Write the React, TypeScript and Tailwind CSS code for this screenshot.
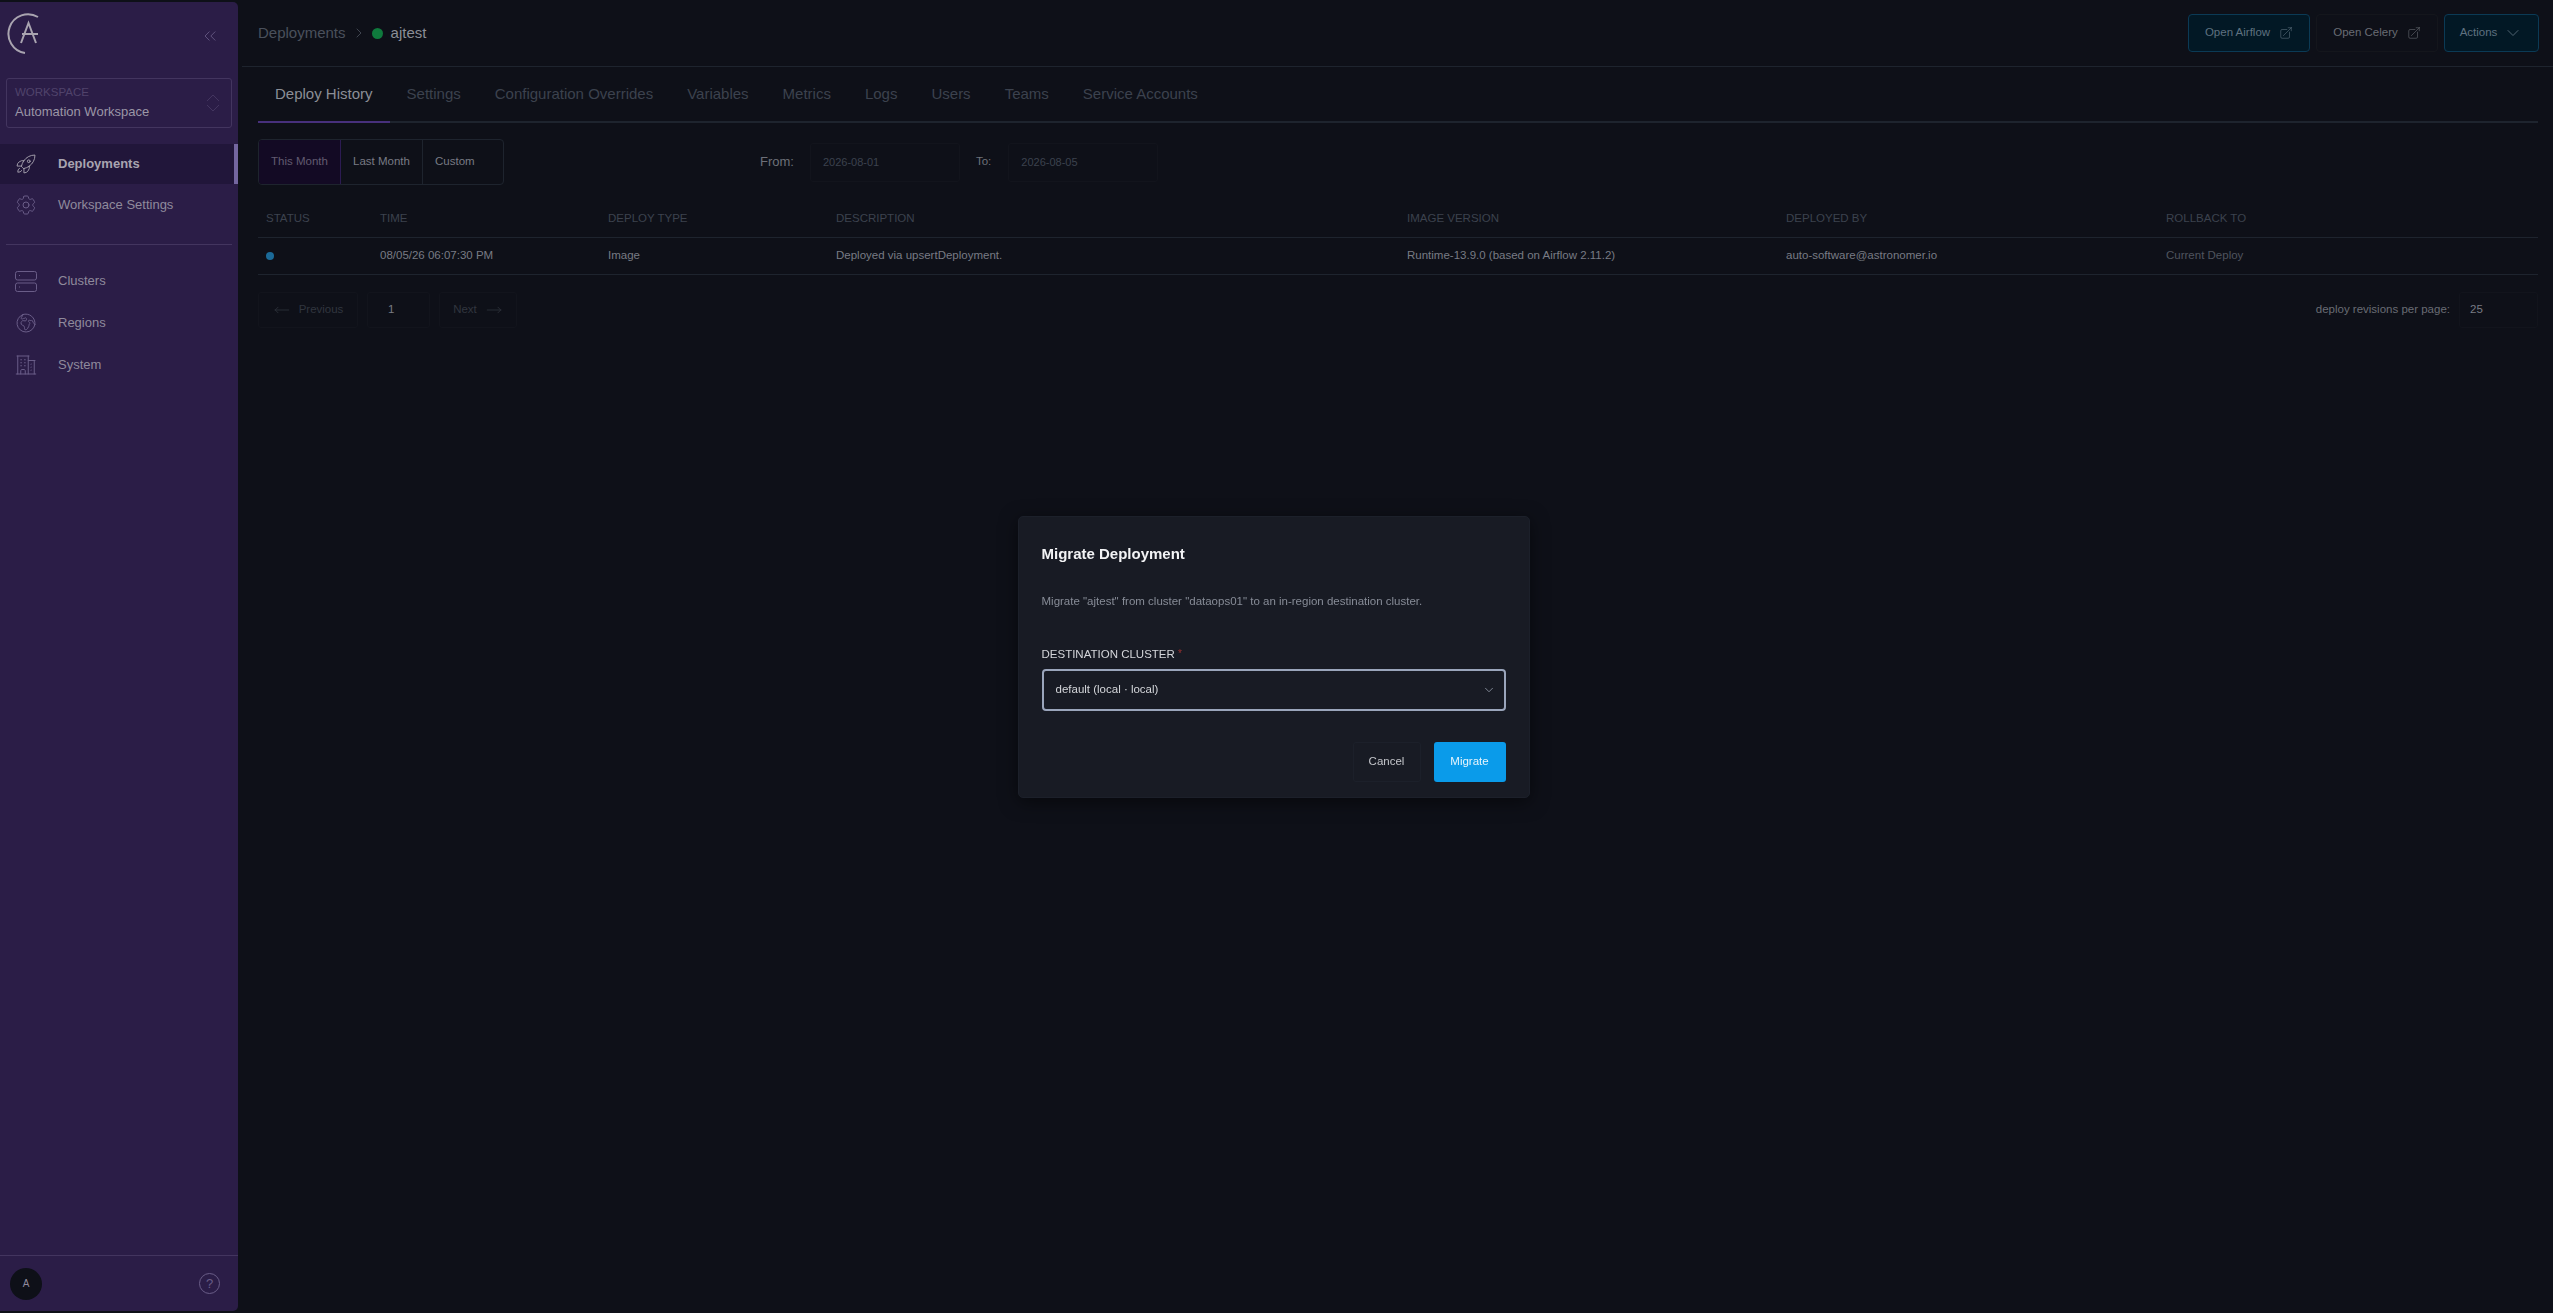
import { ChevronRight, ChevronDown, ChevronsLeft } from 'lucide-react';
import {
  HiOutlineRocketLaunch,
  HiOutlineCog6Tooth,
  HiOutlineGlobeEuropeAfrica,
  HiOutlineBuildingOffice2,
  HiOutlineArrowTopRightOnSquare,
  HiOutlineArrowLongLeft,
  HiOutlineArrowLongRight,
} from 'react-icons/hi2';

const tabs = ['Settings', 'Configuration Overrides', 'Variables', 'Metrics', 'Logs', 'Users', 'Teams', 'Service Accounts'];

const columns = ['Status', 'Time', 'Deploy Type', 'Description', 'Image Version', 'Deployed By', 'Rollback To'];

const gridCols = 'grid grid-cols-[114px_228px_228px_571px_379px_380px_1fr]';

function Logo() {
  return (
    <svg viewBox="0 0 48 48" className="w-12 h-12 text-[#a9a4b0]" fill="none" stroke="currentColor">
      <path d="M32 5A19.5 19.5 0 1 0 19 41" strokeWidth="2" />
      <path d="M15 31L22.5 11L30 31" strokeWidth="2" />
      <path d="M16 22H32" strokeWidth="2" />
    </svg>
  );
}

function ClusterIcon() {
  return (
    <svg viewBox="0 0 24 24" className="w-[24px] h-[24px] text-[#6a5d88]" fill="none" stroke="currentColor" strokeWidth="1">
      <rect x="1.5" y="2.5" width="21" height="8.5" rx="2" />
      <rect x="1.5" y="14" width="21" height="8.5" rx="2" />
      <path d="M5 6.5h1M5 18h1" />
    </svg>
  );
}

function NavItem({ icon, label, active }: { icon: React.ReactNode; label: string; active?: boolean }) {
  return (
    <div className={`relative flex items-center ${active ? 'h-[40px] bg-[#21163a] font-bold text-[#a9a4b0]' : 'h-[42px] text-[#8f8a9c]'}`}>
      <div className="w-[58px] flex justify-center pr-[6px] shrink-0">{icon}</div>
      <span className="text-[13px]">{label}</span>
      {active && <div className="absolute right-0 top-0 bottom-0 w-1 bg-[#7466a0]" />}
    </div>
  );
}

function Sidebar() {
  const iconClass = 'w-[24px] h-[24px] text-[#6a5d88]';
  return (
    <aside className="w-[238px] shrink-0 my-[2px] bg-[#2b1d47] rounded-r-[5px] flex flex-col">
      <div className="h-[76px] flex items-start justify-between pl-[6px] pr-[18px] pt-[10px]">
        <Logo />
        <ChevronsLeft className="w-[20px] h-[20px] mt-[14px] text-[#6a5d88]" strokeWidth={1} />
      </div>
      <div className="mx-[6px] h-[50px] border border-[#43355f] rounded-[3px] flex items-center justify-between pl-[8px] pr-[11px]">
        <div>
          <div className="text-[11.5px] leading-[14px] text-[#50436b]">WORKSPACE</div>
          <div className="text-[13px] leading-[18px] mt-[4px] text-[#9b96a6]">Automation Workspace</div>
        </div>
        <svg viewBox="0 0 14 20" className="w-[14px] h-[20px] text-[#43355f]" fill="none" stroke="currentColor">
          <path d="M1 8L7 2L13 8M1 12L7 18L13 12" />
        </svg>
      </div>
      <div className="mt-[16px]">
        <NavItem active label="Deployments" icon={<HiOutlineRocketLaunch className="w-[22px] h-[22px] text-[#a9a4b0]" strokeWidth={1} />} />
        <NavItem label="Workspace Settings" icon={<HiOutlineCog6Tooth className={iconClass} strokeWidth={1} />} />
      </div>
      <div className="mx-[6px] mt-[18px] border-t border-[#43355f]" />
      <div className="mt-[15px]">
        <NavItem label="Clusters" icon={<ClusterIcon />} />
        <NavItem label="Regions" icon={<HiOutlineGlobeEuropeAfrica className={iconClass} strokeWidth={1} />} />
        <NavItem label="System" icon={<HiOutlineBuildingOffice2 className={iconClass} strokeWidth={1} />} />
      </div>
      <div className="mt-auto h-[56px] border-t border-[#43355f] flex items-center justify-between pl-[10px] pr-[18px]">
        <div className="w-8 h-8 rounded-full bg-[#0e1018] flex items-center justify-center text-[10px] text-[#8f8a9c]">A</div>
        <div className="w-[21px] h-[21px] rounded-full border border-[#6a5d88] flex items-center justify-center text-[13px] text-[#6a5d88]">?</div>
      </div>
    </aside>
  );
}

function Header() {
  return (
    <header className="h-[67px] border-b border-[#1e242e] flex items-center justify-between pl-4 pr-[14px] shrink-0">
      <div className="flex items-center text-[15px]">
        <span className="text-[#4a505c]">Deployments</span>
        <ChevronRight className="w-[16px] h-[16px] mx-[5px] text-[#4a505c]" strokeWidth={1.25} />
        <span className="w-[11px] h-[11px] rounded-full bg-[#0f7a3d] mr-2" />
        <span className="text-[#8b8e96]">ajtest</span>
      </div>
      <div className="flex items-center gap-[6px] text-[11.5px]">
        <button className="h-[38px] w-[122px] flex items-center justify-center gap-[9px] rounded-[4px] border border-[#0b3a55] bg-[#021825] text-[#5f7180]">
          Open Airflow
          <HiOutlineArrowTopRightOnSquare className="w-[14px] h-[14px]" strokeWidth={1} />
        </button>
        <button className="h-[38px] w-[122px] flex items-center justify-center gap-[9px] rounded-[4px] border border-[#14161c] text-[#696c74]">
          Open Celery
          <HiOutlineArrowTopRightOnSquare className="w-[14px] h-[14px]" strokeWidth={1} />
        </button>
        <button className="h-[38px] w-[95px] flex items-center justify-center gap-[6px] rounded-[4px] border border-[#0b3a55] bg-[#021825] text-[#5f7180]">
          Actions
          <ChevronDown className="w-[20px] h-[20px]" strokeWidth={1} />
        </button>
      </div>
    </header>
  );
}

function Tabs() {
  return (
    <div className="h-[56px] flex items-stretch border-b-2 border-[#1e242e]">
      <div className="px-[17px] pt-[1px] -mb-[2px] border-b-2 border-[#47307c] flex items-center text-[15px] text-[#8b8e96]">Deploy History</div>
      {tabs.map((t) => (
        <div key={t} className="px-[17px] pt-[1px] flex items-center text-[15px] text-[#3c424e]">{t}</div>
      ))}
    </div>
  );
}

function Filters() {
  return (
    <div className="mt-4 flex items-center">
      <div className="h-[46px] w-[246px] flex rounded-[4px] border border-[#1e242e] text-[11.5px] overflow-hidden">
        <div className="w-[82px] flex items-center justify-center bg-[#130a24] border-r border-[#2c1b52] text-[#625b70]">This Month</div>
        <div className="w-[82px] flex items-center justify-center border-r border-[#1e242e] text-[#787b84]">Last Month</div>
        <div className="flex-1 flex items-center pl-[12px] text-[#787b84]">Custom</div>
      </div>
      <span className="ml-[256px] text-[13px] text-[#6d7079]">From:</span>
      <div className="ml-4 w-[150px] h-[39px] border border-[#12141c] rounded-[3px] flex items-center pl-3 text-[11px] text-[#3c424e]">2026-08-01</div>
      <span className="ml-4 text-[11.5px] text-[#6d7079]">To:</span>
      <div className="ml-[17px] w-[150px] h-[39px] border border-[#12141c] rounded-[3px] flex items-center pl-3 text-[11px] text-[#3c424e]">2026-08-05</div>
    </div>
  );
}

function DeployTable() {
  return (
    <div className="mt-[15px]">
      <div className={`${gridCols} h-[38px] items-center border-b border-[#1e242e] text-[11.5px] uppercase text-[#3c424e]`}>
        {columns.map((c) => (
          <div key={c} className="pl-2">{c}</div>
        ))}
      </div>
      <div className={`${gridCols} h-[37px] items-center border-b border-[#1e242e] text-[11.5px] text-[#787b84]`}>
        <div className="pl-2"><div className="w-2 h-2 rounded-full bg-[#1b6a98]" /></div>
        <div className="pl-2">08/05/26 06:07:30 PM</div>
        <div className="pl-2">Image</div>
        <div className="pl-2">Deployed via upsertDeployment.</div>
        <div className="pl-2">Runtime-13.9.0 (based on Airflow 2.11.2)</div>
        <div className="pl-2">auto-software@astronomer.io</div>
        <div className="pl-2 text-[#4f545e]">Current Deploy</div>
      </div>
    </div>
  );
}

function Pagination() {
  return (
    <div className="mt-[17px] flex items-center justify-between text-[11.5px]">
      <div className="flex items-center gap-[9px]">
        <div className="h-[36px] w-[100px] flex items-center justify-center gap-[8px] border border-[#12141c] rounded-[3px] text-[#31363f]">
          <HiOutlineArrowLongLeft className="w-[18px] h-[18px]" strokeWidth={1} />
          Previous
        </div>
        <div className="h-[36px] w-[63px] flex items-center pl-[20px] border border-[#12141c] rounded-[3px] text-[#787b84]">1</div>
        <div className="h-[36px] w-[78px] flex items-center justify-center gap-[8px] border border-[#12141c] rounded-[3px] text-[#31363f]">
          Next
          <HiOutlineArrowLongRight className="w-[18px] h-[18px]" strokeWidth={1} />
        </div>
      </div>
      <div className="flex items-center gap-[9px]">
        <span className="text-[#696c74]">deploy revisions per page:</span>
        <div className="h-[36px] w-[79px] flex items-center pl-[10px] border border-[#12141c] rounded-[3px] text-[#787b84]">25</div>
      </div>
    </div>
  );
}

function MigrateModal() {
  return (
    <div className="fixed inset-0 flex items-center justify-center pr-[6px]">
      <div className="w-[512px] h-[282px] bg-[#181b24] rounded-[5px] border border-[#1c202a] shadow-[0_4px_18px_rgba(0,0,0,0.5)] px-[23px] pt-[27px]">
        <h2 className="text-[15px] leading-[20px] font-bold text-[#f2f3f5]">Migrate Deployment</h2>
        <p className="mt-[29px] text-[11.5px] leading-[16px] text-[#878c97]">
          Migrate "ajtest" from cluster "dataops01" to an in-region destination cluster.
        </p>
        <div className="mt-[37px] text-[11.5px] leading-[16px] text-[#d4d6da]">
          DESTINATION CLUSTER <span className="text-[#9a3030] text-[10px] align-top">*</span>
        </div>
        <div className="mt-[7px] h-[42px] border-2 border-[#9aa5bb] rounded-[4px] flex items-center justify-between pl-[12px] pr-[8px] text-[11.5px] text-[#d4d6da]">
          default (local · local)
          <ChevronDown className="w-[14px] h-[14px] text-[#8c93a1]" strokeWidth={1.5} />
        </div>
        <div className="mt-[31px] flex justify-end gap-[13px] text-[11.5px]">
          <button className="w-[68px] h-[40px] border border-[#1c202a] rounded-[3px] text-[#c4c6cb]">Cancel</button>
          <button className="w-[72px] h-[40px] bg-[#0a9bea] rounded-[3px] text-[#e6f4fc]">Migrate</button>
        </div>
      </div>
    </div>
  );
}

export default function App() {
  return (
    <div className="h-screen flex bg-[#0e1018] font-['Liberation_Sans',Arial,sans-serif] overflow-hidden">
      <Sidebar />
      <main className="flex-1 min-w-0 ml-1 flex flex-col">
        <Header />
        <div className="pl-4 pr-[15px]">
          <Tabs />
          <Filters />
          <DeployTable />
          <Pagination />
        </div>
      </main>
      <MigrateModal />
    </div>
  );
}
